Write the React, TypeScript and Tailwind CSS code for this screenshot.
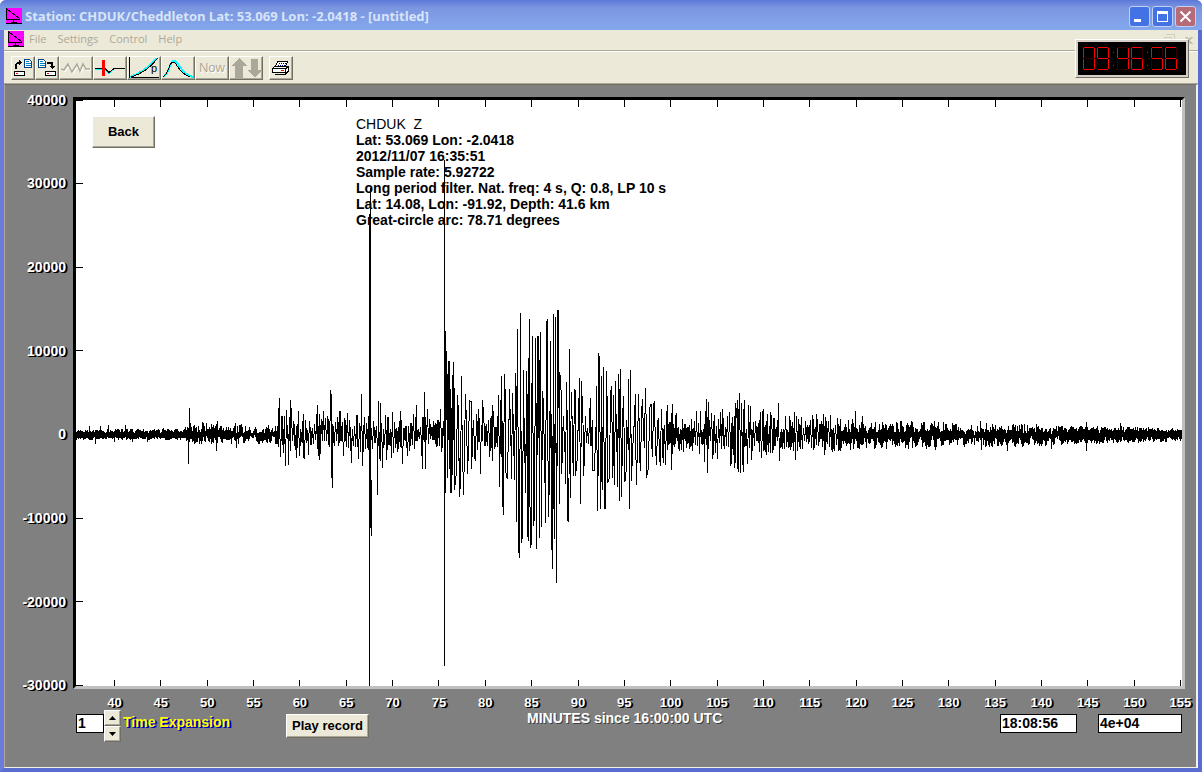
import type { ReactNode } from "react";

const Y_TICKS = [40000, 30000, 20000, 10000, 0, -10000, -20000, -30000];
const X_TICKS = Array.from({ length: 24 }, (_, i) => 40 + i * 5);

const HEADER_LINES = [
  "CHDUK  Z",
  "Lat: 53.069 Lon: -2.0418",
  "2012/11/07 16:35:51",
  "Sample rate: 5.92722",
  "Long period filter. Nat. freq: 4 s, Q: 0.8, LP 10 s",
  "Lat: 14.08, Lon: -91.92, Depth: 41.6 km",
  "Great-circle arc: 78.71 degrees",
];

const PLOT_W = 1106;
const PLOT_H = 586;
const ZERO_Y = 335;

// background envelope: [x, up, down]
const ENVELOPE = [
  [0, 6, 5], [108, 6, 5], [114, 13, 10], [200, 10, 9], [204, 24, 22], [260, 24, 24],
  [320, 28, 28], [362, 16, 14], [368, 55, 50], [395, 40, 40], [405, 24, 25], [424, 24, 26],
  [436, 60, 60], [480, 80, 80], [488, 55, 60], [500, 45, 50], [512, 22, 26], [525, 60, 60],
  [555, 55, 55], [575, 36, 36], [595, 28, 28], [612, 14, 14], [630, 26, 22], [655, 30, 34],
  [680, 28, 26], [702, 20, 20], [750, 20, 20], [790, 14, 14], [850, 14, 15], [900, 12, 12],
  [950, 12, 13], [1000, 9, 9], [1050, 9, 9], [1106, 7, 6],
];

// picked extremes: [x, offset above zero]
const PEAKS = [
  [13, 9], [19, -9], [24, 9], [32, 10], [38, -7], [49, 10], [56, -7], [71, -7], [87, 7],
  [112, -29], [113, 27], [140, -16], [141, 14], [159, 12], [160, -13],
  [202, 27], [203, 37], [204, -22], [209, -31], [210, 25], [212, -30], [214, 35], [220, -23],
  [222, 24], [227, -22], [232, -20], [241, 30], [243, -25], [254, 45], [255, 37], [255, -43],
  [256, -53], [275, -28], [285, 41], [286, -31], [301, -60], [302, 34], [306, -33], [304, 32],
  [324, 24], [326, -29], [340, 30], [346, -34], [348, 43], [349, -34], [351, 26],
  [369, 104], [369, -58], [370, 84], [371, -43], [372, 74], [373, 74], [374, -58], [375, -58],
  [376, 60], [377, 73], [378, -55], [381, 40], [383, -62], [385, 59], [384, -54], [387, -60],
  [389, 41], [391, -28], [395, 33], [402, 26], [404, -39], [406, 35], [416, 30], [422, 40],
  [423, -52], [425, 59], [426, -63], [427, -80], [428, 61], [429, -35], [433, 46], [435, -44],
  [436, 42], [439, 62], [440, -87], [441, 106], [442, -113], [443, -123], [444, 122],
  [445, -108], [446, -104], [447, 65], [450, 64], [451, -102], [452, 77], [452, -106],
  [453, 116], [454, -113], [455, -108], [456, 99], [457, -91], [458, -86], [459, 97],
  [460, -114], [461, 99], [462, 99], [463, -103], [464, 103], [465, -92], [466, 44], [469, -88],
  [470, 112], [471, 116], [472, -82], [474, 94], [475, -115], [476, -134], [477, 121],
  [478, -104], [479, 118], [480, -148], [481, 125], [482, 125], [483, -69], [485, 38],
  [489, -49], [490, 53], [491, -85], [492, -87], [493, 86], [494, -63], [495, 43], [498, 45],
  [499, -41], [503, 57], [504, -69], [505, 54], [507, -41], [514, 37], [516, -35], [520, 49],
  [521, -76], [522, 82], [523, 76], [524, -74], [525, 59], [526, -55], [527, 68], [528, -74],
  [529, -74], [530, 64], [531, -48], [534, 42], [536, -43], [537, 40], [538, -50], [539, 54],
  [541, -52], [542, 61], [543, -66], [544, 66], [545, -62], [547, 39], [550, -33], [552, 56],
  [553, -74], [554, 65], [555, -46], [559, 41], [560, -50], [562, 41], [569, 47], [570, -43],
  [575, 30], [585, 26], [589, -30], [591, 30], [595, -35], [596, 31], [620, 24], [624, 24],
  [628, -27], [630, 36], [631, -38], [632, 33], [635, 22], [641, -24], [653, 23], [655, -22],
  [658, -33], [659, 32], [661, 35], [662, -37], [663, 42], [664, -38], [665, 32], [667, -37],
  [668, 35], [671, -29], [672, 30], [674, 29], [675, -25], [687, 25], [694, 23], [702, 32],
  [703, -26], [718, 23], [719, -25], [740, 21], [747, 21], [754, 20], [779, 24], [786, 19],
  [858, 14], [859, -15], [904, 14], [905, -15], [931, -16], [975, -14], [1010, 13], [1010, -16],
  [1044, 12],
];

function envelopeAt(x: number) {
  const i = Math.max(1, ENVELOPE.findIndex((e) => e[0] >= x));
  const [x0, u0, d0] = ENVELOPE[i - 1];
  const [x1, u1, d1] = ENVELOPE[i];
  const t = (x - x0) / (x1 - x0);
  return [u0 + (u1 - u0) * t, d0 + (d1 - d0) * t];
}

function buildTrace() {
  let seed = 1735;
  const rand = () => {
    seed = (seed * 16807) % 2147483647;
    return seed / 2147483647;
  };
  const points = PEAKS.map(([x, v]) => [x + 0.5, v]);
  let up = true;
  let x = 0;
  while (x < PLOT_W) {
    const [u, d] = envelopeAt(x);
    // strong motion has longer swings, quiet stretches merge into a band
    const floor = u < 10 ? 0.5 : 0.2;
    const k = floor + (1 - floor) * rand();
    points.push([x, up ? u * k : -d * k]);
    up = !up;
    x += u < 18 ? 0.5 + rand() * 0.3 : u < 32 ? 0.9 + rand() * 0.5 : 1.6 + rand() * 0.6;
  }
  points.sort((a, b) => a[0] - b[0]);
  return points.map(([px, v]) => `${px.toFixed(1)},${(ZERO_Y - v).toFixed(0)}`).join(" ");
}

const TRACE = buildTrace();

function Seismogram() {
  return (
    <svg
      viewBox={`0 0 ${PLOT_W} ${PLOT_H}`}
      preserveAspectRatio="none"
      className="block h-full w-full"
      shapeRendering="crispEdges"
      stroke="#000"
      fill="none"
      role="img"
      aria-label="Seismogram trace"
    >
      {X_TICKS.map((t, i) => {
        const x = Math.floor(38.4 + i * 46.36) + 0.5;
        return <path key={t} d={`M${x} 0v7M${x} 580v6`} />;
      })}
      {Y_TICKS.map((t, i) => (
        <path key={t} d={`M0 ${Math.floor(i * 83.6) + 0.5}h7`} />
      ))}
      <polyline points={TRACE} />
      {/* calibration spikes */}
      <path d="M293.5 114V586M294.5 88V428M295.5 380V436M368.5 60V566" />
    </svg>
  );
}

// a b c d e f g
const SEGMENTS = ["M1 .5h10", "M11.5 1v10", "M11.5 12v10", "M1 22.5h10", "M.5 12v10", "M.5 1v10", "M1 11.5h10"];
const DIGITS: Record<string, string> = {
  "0": "1111110",
  "4": "0110011",
  "5": "1011011",
  "6": "1011111",
  "9": "1111011",
};

function LedClock({ time }: { time: string }) {
  let x = 5;
  return (
    <div
      className="absolute top-[39px] right-[13px] border border-t-white border-l-white border-r-[#716f64] border-b-[#716f64] bg-[#d4d0c8] p-0.5"
      role="img"
      aria-label={time}
    >
      <svg width="108" height="33" className="block bg-black" shapeRendering="crispEdges" fill="none">
        {time.split("").map((ch, i) => {
          const at = x;
          x += ch === ":" ? 6 : 14;
          if (ch === ":") {
            return <path key={i} d={`M${at + 2} 10.5h1M${at + 2} 23.5h1`} stroke="#f00" />;
          }
          return (
            <g key={i} transform={`translate(${at} 5)`}>
              {SEGMENTS.map((d, s) => (
                <path key={s} d={d} stroke={DIGITS[ch][s] === "1" ? "#f00" : "#300000"} />
              ))}
            </g>
          );
        })}
      </svg>
    </div>
  );
}

function AppIcon() {
  return (
    <svg width="16" height="16" viewBox="0 0 16 16" className="shrink-0" shapeRendering="crispEdges">
      <path fill="#f0f" d="M0 0h16v16H0z" />
      <path d="M.5 0v12M0 11.5h14M1 1l13 10M7.5 12v2M5 14.5h6M0 15.5h16" stroke="#000" fill="none" />
    </svg>
  );
}

function ToolButton({ label, wide, children }: { label: string; wide?: boolean; children: ReactNode }) {
  return (
    <button
      aria-label={label}
      className={`flex h-6 items-center justify-center border border-t-white border-l-white border-r-[#716f64] border-b-[#716f64] bg-[#ece9d8] shadow-[inset_-1px_-1px_0_#aca899] ${wide ? "w-[34px]" : "w-6"}`}
    >
      {children}
    </button>
  );
}

function DocIcon({ out }: { out?: boolean }) {
  return (
    <svg width="20" height="20" viewBox="0 0 20 20" shapeRendering="crispEdges" fill="none">
      <path d={out ? "M1.5 1.5h5l2 2v6h-7z" : "M11.5 1.5h5l2 2v6h-7z"} fill="#fff" stroke="#004080" />
      <path d={out ? "M3 3.5h3M3 5.5h5M3 7.5h5" : "M13 3.5h3M13 5.5h5M13 7.5h5"} stroke="#0080c0" />
      <path
        d={
          out
            ? "M10 4h5l1 1v3h2v1h-1v1h-1v1h-1v-1h-1V9h-1V8h1V6h-4z"
            : "M2 11V6l2-2h2V2h1v1h1v1h1v1h-1v1H7v1H6V6H4v5z"
        }
        fill="#000"
      />
      <path d={out ? "M8.5 13.5h10v4h-10z" : "M1.5 13.5h10v4h-10z"} fill="#fff" stroke="#000" />
      <path d={out ? "M10 15.5h2" : "M3 15.5h2"} stroke="#f00" />
    </svg>
  );
}

function Toolbar() {
  return (
    <div className="flex h-[33px] items-center border-t border-b border-t-white border-b-[#aca899] bg-[#ece9d8] pr-2 pl-[7px]">
      <ToolButton label="Load record">
        <DocIcon />
      </ToolButton>
      <ToolButton label="Save record">
        <DocIcon out />
      </ToolButton>
      <ToolButton label="Filter" wide>
        <svg width="30" height="16" fill="none" stroke="#aca899" strokeWidth="1.5">
          <path stroke="#fff" d="M1 10l3 1 4-6 4 8 5-8 3 7 3-7 3 5h4" />
          <path d="M0 9l3 1 4-6 4 8 5-8 3 7 3-7 3 5h4" />
        </svg>
      </ToolButton>
      <ToolButton label="Pick arrival" wide>
        <svg width="30" height="18" fill="none" shapeRendering="crispEdges">
          <path d="M0 10.5h10l4 4 5-5h11" stroke="#0ff" />
          <path d="M0 9.5h10l4 4 5-4h11" stroke="#000" />
          <path d="M8.5 1v16" stroke="#f00" strokeWidth="3" />
        </svg>
      </ToolButton>
      <ToolButton label="Travel time" wide>
        <svg width="32" height="21" fill="none" shapeRendering="crispEdges">
          <path d="M1.5 0v20.5h29" stroke="#000" />
          <path d="M2 20Q17 15 29 1" stroke="#0ff" strokeWidth="2" />
          <path d="M3 20Q18 16 30 1" stroke="#000" />
          <text x="23" y="15" fontSize="11" fontFamily="Liberation Sans" fill="#000">
            p
          </text>
        </svg>
      </ToolButton>
      <ToolButton label="Spectrum" wide>
        <svg width="30" height="20" fill="none" shapeRendering="crispEdges">
          <path d="M1 18C7 15 6 3 11 3s6 13 19 16" stroke="#0ff" strokeWidth="2" />
          <path d="M0 19C6 16 6 4 10 4s6 12 17 15" stroke="#000" />
        </svg>
      </ToolButton>
      <ToolButton label="Now" wide>
        <span className="text-[13px] leading-4 text-[#aca899] [text-shadow:1px_1px_0_#fff]">Now</span>
      </ToolButton>
      <ToolButton label="Scale" wide>
        <svg width="32" height="20" fill="#aca899" shapeRendering="crispEdges">
          <path d="M9 0l8 8h-4v12H5V8H1zM21 1h7v11h4l-7 8-7-8h3z" />
        </svg>
      </ToolButton>
      <div className="ml-1.5">
        <ToolButton label="Print">
          <svg width="20" height="18" viewBox="0 0 20 18" fill="#fff" stroke="#000" shapeRendering="crispEdges">
            <path d="M6.5 2.5h10l-2 5h-10z" />
            <path d="M8 4.5h7M7 6.5h7" stroke="#000080" strokeDasharray="1 1" fill="none" />
            <path d="M1.5 9.5l2-2h14l-2 2zM1.5 9.5h13v4h-13zM14.5 9.5l3-2v4l-3 3z" />
            <path d="M3.5 15.5h11l3-3" fill="none" />
            <path d="M10 11.5h3" stroke="#f00" />
          </svg>
        </ToolButton>
      </div>
    </div>
  );
}

function TitleBar() {
  const base = "flex size-[21px] items-center justify-center rounded-[3px] border border-[#c3d0f5] text-white";
  return (
    <header className="flex h-[30px] items-center rounded-t-md bg-linear-to-b from-[#5c78d8] via-[#7b96e0] via-25% to-[#84a8ec] pt-0.5 pr-1.5 pl-1.5">
      <AppIcon />
      <h1 className="ml-[3px] flex-1 truncate font-[Open_Sans] text-[13px] leading-5 font-bold text-[#d8e4f8]">
        Station: CHDUK/Cheddleton Lat: 53.069 Lon: -2.0418 - [untitled]
      </h1>
      <div className="flex gap-0.5">
        <button aria-label="Minimize" className={`${base} bg-[#4272e4]`}>
          <svg width="13" height="13" fill="currentColor">
            <path d="M1 9h7v3H1z" />
          </svg>
        </button>
        <button aria-label="Maximize" className={`${base} bg-[#4272e4]`}>
          <svg width="13" height="13" fill="none" stroke="currentColor" shapeRendering="crispEdges">
            <path d="M1.5 2.5h10v9h-10zM1 1.5h11M1 3.5h11" />
          </svg>
        </button>
        <button aria-label="Close" className={`${base} bg-[#b56b78]`}>
          <svg width="13" height="13" stroke="currentColor" strokeWidth="2">
            <path d="M1.5 1.5l10 10M11.5 1.5l-10 10" />
          </svg>
        </button>
      </div>
    </header>
  );
}

function MenuBar() {
  return (
    <nav className="flex h-[21px] items-center border-b border-[#aca899] bg-[#ece9d8] pr-1 pb-0.5 pl-1 font-[Open_Sans] text-[11px] leading-4 text-[#aca899]">
      <AppIcon />
      <button className="ml-[5px]">File</button>
      <button className="ml-[11px]">Settings</button>
      <button className="ml-[11px]">Control</button>
      <button className="ml-[11px]">Help</button>
      <svg width="32" height="12" className="ml-auto" fill="none" stroke="#d2cfbf" shapeRendering="crispEdges">
        <path d="M4 1.5h8v5M2 4.5h7v5H2z" />
        <path d="M24 4l6 7M30 4l-6 7" strokeWidth="2" stroke="#c5c2b2" />
      </svg>
    </nav>
  );
}

const RAISED =
  "border border-t-white border-l-white border-r-[#716f64] border-b-[#716f64] bg-[#ece9d8] shadow-[inset_-1px_-1px_0_#aca899]";
const FIELD = "h-[19px] border border-black bg-white px-px pb-0.5 text-sm leading-4 font-bold text-black outline-none";

export default function App() {
  return (
    <div className="flex min-h-screen flex-col bg-white font-['Liberation_Sans',sans-serif]">
      <div className="flex flex-1 flex-col rounded-t-md bg-[#6f83dc]">
        <TitleBar />
        <div className="flex flex-1 flex-col border-x-4 border-b-4 border-[#6b7cdc] border-r-[#5b6cd0] border-b-[#5b6cd0]">
          <MenuBar />
          <Toolbar />
          <main className="flex flex-1 flex-col border-t border-r-2 border-b border-l border-t-[#716f64] border-r-[#f4f0e4] border-b-[#f4f0e4] border-l-[#aca899] bg-[#808080] pt-3 pr-[11px] pb-[25px] text-sm leading-4 font-bold text-white">
            <div className="flex flex-1">
              <div className="flex w-[68px] flex-col items-end justify-between pt-0.5 pr-[7px] pb-[3px] [text-shadow:1px_1px_0_#000,2px_1px_0_#000]">
                {Y_TICKS.map((t) => (
                  <span key={t} className="flex h-px items-center">
                    {t}
                  </span>
                ))}
              </div>
              <div className="relative flex-1 border-3 border-black border-r-[#c0c0c0] border-b-[#c0c0c0] bg-white">
                <div className="absolute inset-0">
                  <Seismogram />
                </div>
                <div className="absolute top-4 left-[280px] whitespace-pre text-black">
                  {HEADER_LINES.map((line, i) => (
                    <p key={line} className={i === 0 ? "font-normal" : ""}>
                      {line}
                    </p>
                  ))}
                </div>
                <button className={`absolute top-4 left-4 h-8 w-[63px] text-[13px] text-black ${RAISED}`}>Back</button>
              </div>
            </div>

            <div className="ml-[109px] flex h-[21px] justify-between pt-1.5 pr-1 text-[13px] [text-shadow:1px_1px_0_#000,2px_1px_0_#000]">
              {X_TICKS.map((t) => (
                <span key={t} className="flex w-px justify-center">
                  {t}
                </span>
              ))}
            </div>

            <div className="flex h-8 items-start pr-[3px] pl-[71px]">
              <input id="expansion" defaultValue="1" className={`mt-1 w-7 ${FIELD}`} />
              <div className="flex flex-col">
                <button aria-label="Increase" className={`flex h-4 w-[17px] items-center justify-center ${RAISED}`}>
                  <svg width="7" height="4">
                    <path d="M3.5 0L7 4H0z" />
                  </svg>
                </button>
                <button aria-label="Decrease" className={`flex h-4 w-[17px] items-center justify-center ${RAISED}`}>
                  <svg width="7" height="4">
                    <path d="M0 0h7L3.5 4z" />
                  </svg>
                </button>
              </div>
              <label
                htmlFor="expansion"
                className="mt-1 ml-0.5 w-[163px] text-[#ff0] [text-shadow:1px_1px_0_#0000c0,2px_1px_0_#0000c0]"
              >
                Time Expansion
              </label>
              <button className={`mt-1 h-6 w-[83px] text-[13px] text-black ${RAISED}`}>Play record</button>
              <p className="flex-1 pl-[158px] [text-shadow:1px_1px_0_#404040]">MINUTES since 16:00:00 UTC</p>
              <input aria-label="Time" defaultValue="18:08:56" className={`mt-1 w-[77px] ${FIELD}`} />
              <input aria-label="Amplitude" defaultValue="4e+04" className={`mt-1 ml-[21px] w-[84px] ${FIELD}`} />
            </div>
          </main>
        </div>
      </div>
      <LedClock time="09:46:56" />
    </div>
  );
}
